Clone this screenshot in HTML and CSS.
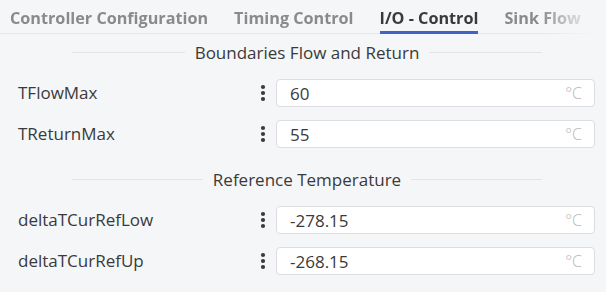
FILE: index.html
```html
<!DOCTYPE html>
<html>
<head>
<meta charset="utf-8">
<link rel="stylesheet" href="styles.css">
</head>
<body>
<nav class="tabs">
  <div class="tab">Controller Configuration</div>
  <div class="tab">Timing Control</div>
  <div class="tab active">I/O - Control</div>
  <div class="tab">Sink Flow</div>
</nav>
<section class="group">
  <div class="heading"><span class="line"></span><span class="title">Boundaries Flow and Return</span><span class="line"></span></div>
  <div class="row">
    <div class="label">TFlowMax</div>
    <div class="menu"><svg width="6" height="18" viewBox="0 0 6 18"><circle cx="3" cy="3" r="2.1"/><circle cx="3" cy="9" r="2.1"/><circle cx="3" cy="15" r="2.1"/></svg></div>
    <div class="field"><span class="value">60</span><span class="unit">°C</span></div>
  </div>
  <div class="row">
    <div class="label">TReturnMax</div>
    <div class="menu"><svg width="6" height="18" viewBox="0 0 6 18"><circle cx="3" cy="3" r="2.1"/><circle cx="3" cy="9" r="2.1"/><circle cx="3" cy="15" r="2.1"/></svg></div>
    <div class="field"><span class="value">55</span><span class="unit">°C</span></div>
  </div>
</section>
<section class="group">
  <div class="heading"><span class="line"></span><span class="title">Reference Temperature</span><span class="line"></span></div>
  <div class="row">
    <div class="label">deltaTCurRefLow</div>
    <div class="menu"><svg width="6" height="18" viewBox="0 0 6 18"><circle cx="3" cy="3" r="2.1"/><circle cx="3" cy="9" r="2.1"/><circle cx="3" cy="15" r="2.1"/></svg></div>
    <div class="field"><span class="value">-278.15</span><span class="unit">°C</span></div>
  </div>
  <div class="row">
    <div class="label">deltaTCurRefUp</div>
    <div class="menu"><svg width="6" height="18" viewBox="0 0 6 18"><circle cx="3" cy="3" r="2.1"/><circle cx="3" cy="9" r="2.1"/><circle cx="3" cy="15" r="2.1"/></svg></div>
    <div class="field"><span class="value">-268.15</span><span class="unit">°C</span></div>
  </div>
</section>
</body>
</html>
```
FILE: styles.css
```css
html, body {
  margin: 0;
  padding: 0;
  background: #f5f6f8;
  font-family: "Open Sans", "Noto Sans", sans-serif;
  color: #3a3a3a;
  width: 606px;
  height: 292px;
  overflow: hidden;
}
.tabs {
  display: flex;
  gap: 26px;
  height: 33px;
  padding-left: 10px;
  border-bottom: 1px solid #e4e6ea;
  margin-right: 6px;
  -webkit-mask-image: linear-gradient(to right, #000 540px, rgba(0,0,0,0.4) 570px, rgba(0,0,0,0) 598px);
  mask-image: linear-gradient(to right, #000 540px, rgba(0,0,0,0.4) 570px, rgba(0,0,0,0) 598px);
}
.tab {
  font-weight: 700;
  font-size: 16.2px;
  color: #8a8a8a;
  line-height: 22px;
  padding-top: 7px;
  height: 33px;
  box-sizing: border-box;
  white-space: nowrap;
}
.tab.active {
  color: #3a3a3a;
  border-bottom: 3px solid #4262c9;
  margin-bottom: -1px;
  height: 34px;
}
.group {
  display: flex;
  flex-direction: column;
}
.heading {
  display: flex;
  align-items: center;
  gap: 10px;
  height: 36px;
  margin-left: 72px;
  width: 470px;
}
.heading .line {
  flex: 1;
  height: 1px;
  background: #e2e4e8;
}
.heading .title {
  font-size: 17px;
  color: #3a3a3a;
}
.group + .group .heading {
  margin-top: 13px;
}
.row {
  display: grid;
  grid-template-columns: 240px 18px 1fr;
  align-items: center;
  height: 28px;
  padding-left: 18px;
  padding-right: 11px;
  margin-top: 13px;
}
.heading + .row {
  margin-top: 9px;
}
.label {
  font-size: 17px;
  color: #3a3a3a;
  margin-top: -2px;
}
.menu {
  display: flex;
  align-items: center;
  padding-left: 2px;
}
.menu svg {
  fill: #3a3a3a;
}
.field {
  display: flex;
  align-items: center;
  justify-content: space-between;
  height: 28px;
  box-sizing: border-box;
  background: #fff;
  border: 1px solid #dcdde0;
  border-radius: 4px;
  padding: 0 12px 0 13px;
}
.value {
  font-size: 17px;
  color: #3a3a3a;
}
.unit {
  font-size: 16px;
  color: #b8b8b8;
  font-weight: 300;
}
```
